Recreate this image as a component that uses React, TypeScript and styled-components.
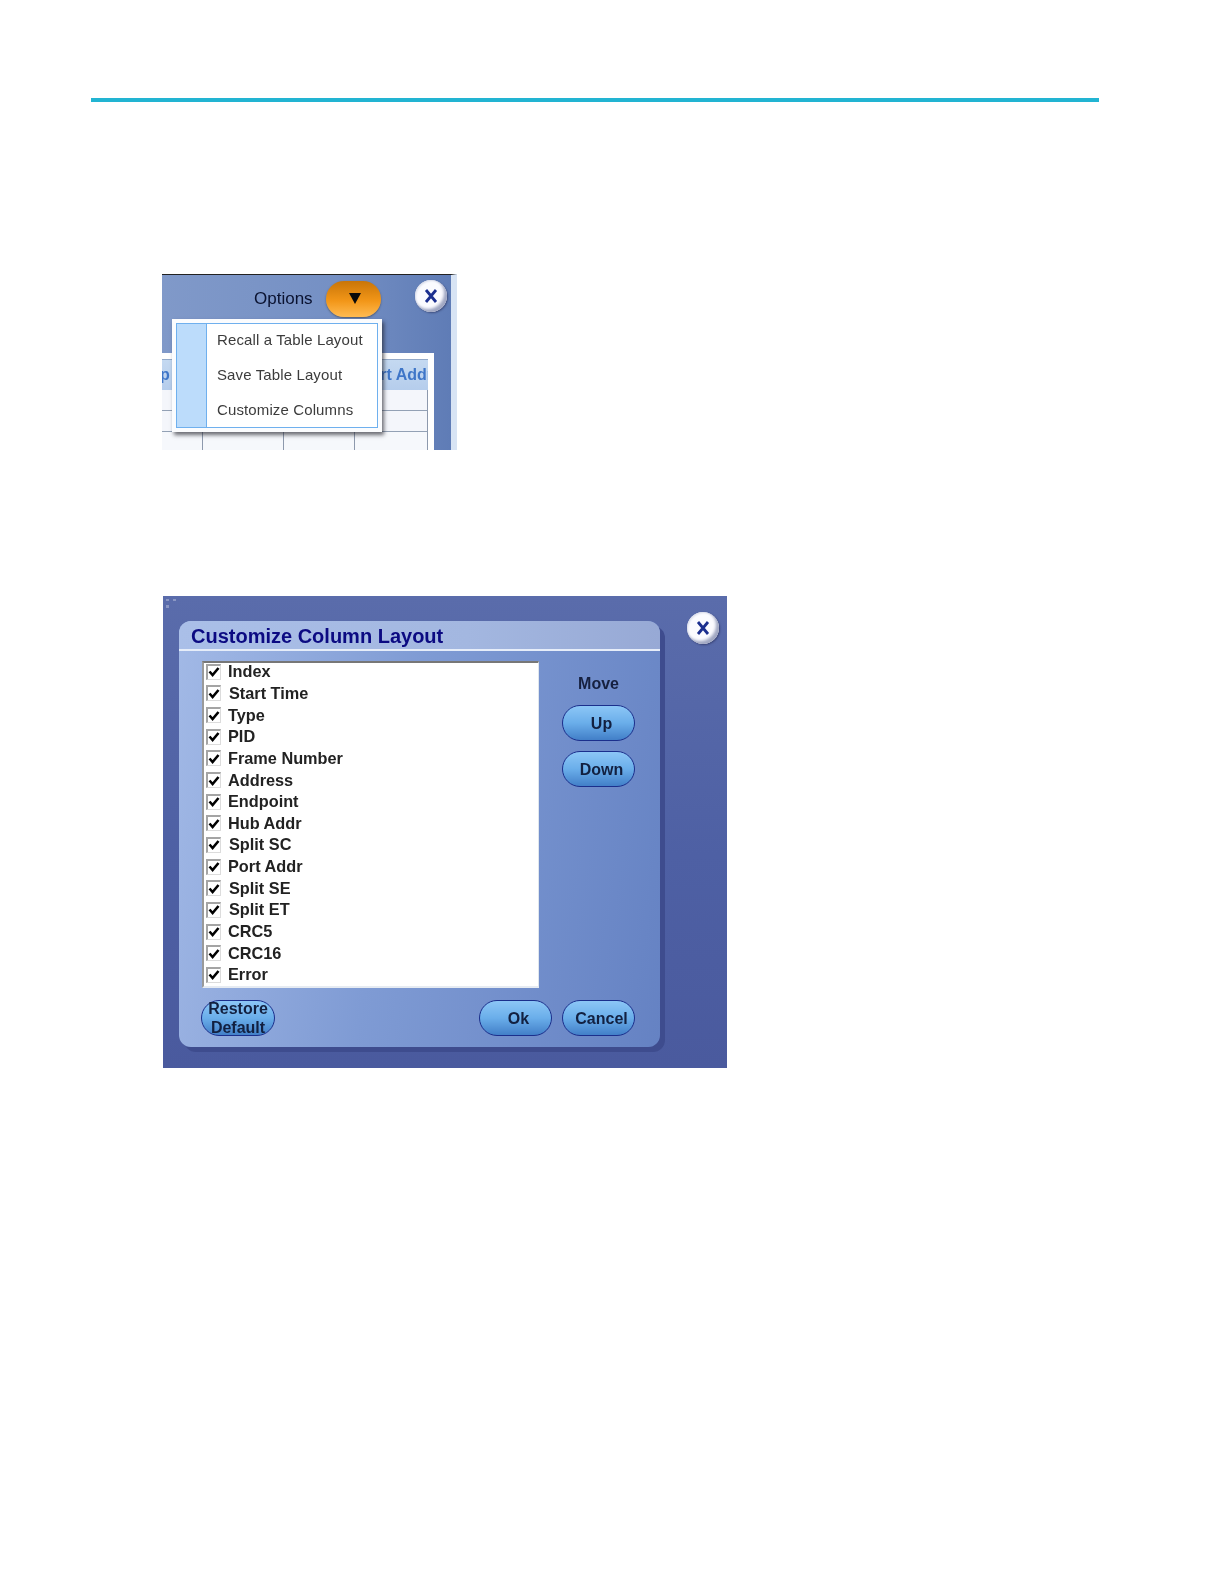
import React from 'react';
import styled, { createGlobalStyle } from 'styled-components';

const GlobalStyle = createGlobalStyle`
  html, body {
    margin: 0;
    padding: 0;
    background: #fff;
    font-family: "Liberation Sans", Arial, sans-serif;
  }
`;

const COLUMNS = [
  'Index',
  'Start Time',
  'Type',
  'PID',
  'Frame Number',
  'Address',
  'Endpoint',
  'Hub Addr',
  'Split SC',
  'Port Addr',
  'Split SE',
  'Split ET',
  'CRC5',
  'CRC16',
  'Error',
];

const CloseIcon = () => (
  <svg width="14" height="14" viewBox="0 0 14 14">
    <path d="M2 1 L12 13 M12 1 L2 13" stroke="#1c2f8f" strokeWidth="2.8" fill="none" />
  </svg>
);

const CheckIcon = () => (
  <svg width="12" height="12" viewBox="0 0 12 12">
    <path d="M1.5 5.5 L4.6 9 L10.5 2" stroke="#000" strokeWidth="2.6" fill="none" />
  </svg>
);

const DragGrip = () => (
  <svg width="16" height="16" viewBox="0 0 16 16">
    <path d="M2 2h3v2H2zM9 2h3v2H9zM2 8h3v3H2z" fill="#8b97c4" />
  </svg>
);

export default function App() {
  return (
    <Page>
      <GlobalStyle />
      <Rule />

      <MenuFigure>
        <TopBar>
          <OptionsLabel>Options</OptionsLabel>
          <OptionsButton>
            <Arrow />
          </OptionsButton>
        </TopBar>
        <CloseButton $top={5} $right={4}>
          <CloseIcon />
        </CloseButton>
        <TablePanel>
          <TableHead>
            <HeadCell $align="left">p</HeadCell>
            <HeadCell $align="right">rt Addr</HeadCell>
          </TableHead>
          <TableRow />
          <TableRow />
          <TableGridRow>
            <span />
            <span />
            <span />
            <span />
          </TableGridRow>
        </TablePanel>
        <Dropdown>
          <DropdownInner>
            <MenuGutter />
            <MenuList>
              <MenuItem>Recall a Table Layout</MenuItem>
              <MenuItem>Save Table Layout</MenuItem>
              <MenuItem>Customize Columns</MenuItem>
            </MenuList>
          </DropdownInner>
        </Dropdown>
      </MenuFigure>

      <DialogFigure>
        <Grip>
          <DragGrip />
        </Grip>
        <CloseButton $top={16} $right={8}>
          <CloseIcon />
        </CloseButton>
        <Panel>
          <TitleBar>Customize Column Layout</TitleBar>
          <PanelBody>
            <ColumnList>
              {COLUMNS.map(name => (
                <ColumnRow key={name}>
                  <CheckBox>
                    <CheckIcon />
                  </CheckBox>
                  <ColumnName $nudge={name.startsWith('S')}>{name}</ColumnName>
                </ColumnRow>
              ))}
            </ColumnList>
            <MoveColumn>
              <MoveLabel>Move</MoveLabel>
              <PillButton>Up</PillButton>
              <PillButton>Down</PillButton>
            </MoveColumn>
          </PanelBody>
          <Footer>
            <PillButton $tight>
              Restore
              <br />
              Default
            </PillButton>
            <FooterRight>
              <PillButton>Ok</PillButton>
              <PillButton>Cancel</PillButton>
            </FooterRight>
          </Footer>
        </Panel>
      </DialogFigure>
    </Page>
  );
}

const Page = styled.div`
  width: 1224px;
  height: 1584px;
  padding-top: 98px;
  box-sizing: border-box;
  overflow: hidden;
`;

const Rule = styled.div`
  width: 1008px;
  height: 4px;
  margin-left: 91px;
  background: #22b4d2;
`;

const MenuFigure = styled.div`
  position: relative;
  width: 295px;
  height: 176px;
  margin: 172px 0 0 162px;
  box-sizing: border-box;
  border-top: 1px solid #222;
  border-right: 6px solid #d8e4f4;
  background: linear-gradient(90deg, #8099c9 0%, #7590c4 60%, #5f7cb6 100%);
  filter: blur(0.5px);
  overflow: hidden;
`;

const TopBar = styled.div`
  display: flex;
  align-items: center;
  height: 42px;
  padding: 5px 0 0 92px;
  box-sizing: border-box;
`;

const OptionsLabel = styled.span`
  width: 72px;
  font-size: 17px;
  color: #0a1230;
`;

const OptionsButton = styled.div`
  display: flex;
  align-items: center;
  justify-content: center;
  width: 55px;
  height: 36px;
  padding-left: 3px;
  box-sizing: border-box;
  border-radius: 18px;
  background: linear-gradient(180deg, #c97508 0%, #f29618 55%, #ffbb52 100%);
  box-shadow: 0 1px 2px rgba(50, 40, 20, 0.5);
`;

const Arrow = styled.div`
  width: 0;
  height: 0;
  border-left: 6px solid transparent;
  border-right: 6px solid transparent;
  border-top: 11px solid #0a0a0a;
`;

const CloseButton = styled.div<{ $top: number; $right: number }>`
  position: absolute;
  top: ${p => p.$top}px;
  right: ${p => p.$right}px;
  display: flex;
  align-items: center;
  justify-content: center;
  width: 32px;
  height: 32px;
  border-radius: 50%;
  background: #fbfbff;
  box-shadow: inset -3px -3px 3px #9fa6c2, inset 1px 1px 2px #d8dcea, 1px 1px 2px rgba(25, 30, 70, 0.5);
`;

const TablePanel = styled.div`
  width: 272px;
  height: 97px;
  margin-top: 36px;
  padding: 6px 6px 0 0;
  box-sizing: border-box;
  background: #fff;
  overflow: hidden;
`;

const TableHead = styled.div`
  display: flex;
  justify-content: space-between;
  align-items: center;
  height: 31px;
  background: linear-gradient(180deg, #c4d9f1, #b5cdec);
  border-top: 1px solid #92a9c9;
  box-sizing: border-box;
  overflow: hidden;
`;

const HeadCell = styled.span<{ $align: 'left' | 'right' }>`
  font-size: 16px;
  font-weight: 700;
  color: #3f76c8;
  white-space: nowrap;
  margin-right: ${p => (p.$align === 'right' ? '-5px' : '0')};
  margin-left: ${p => (p.$align === 'left' ? '-2px' : '0')};
`;

const TableRow = styled.div`
  height: 21px;
  box-sizing: border-box;
  background: #f4f6fb;
  border-bottom: 1px solid #93a1b5;
  border-right: 1px solid #8d99ad;
`;

const TableGridRow = styled.div`
  display: grid;
  grid-template-columns: 41px 81px 71px 73px;
  height: 20px;
  background: #f6f8fc;
  span {
    border-right: 1px solid #8d99ad;
  }
`;

const Dropdown = styled.div`
  position: absolute;
  top: 44px;
  left: 10px;
  width: 210px;
  height: 113px;
  padding: 4px;
  box-sizing: border-box;
  background: #fbfcfe;
  box-shadow: 2px 3px 4px rgba(30, 30, 40, 0.65);
`;

const DropdownInner = styled.div`
  display: flex;
  height: 100%;
  box-sizing: border-box;
  border: 1px solid #6fb0ee;
  background: #fff;
`;

const MenuGutter = styled.div`
  width: 29px;
  background: #bcdcfb;
  border-right: 1px solid #6fb0ee;
`;

const MenuList = styled.div`
  display: flex;
  flex-direction: column;
  gap: 12px;
  padding: 4px 0 0 10px;
`;

const MenuItem = styled.div`
  font-size: 15px;
  line-height: 23px;
  color: #3c3c3c;
  letter-spacing: 0.12px;
  white-space: nowrap;
`;

const DialogFigure = styled.div`
  position: relative;
  width: 564px;
  height: 472px;
  margin: 146px 0 0 163px;
  padding: 25px 0 0 16px;
  box-sizing: border-box;
  background: linear-gradient(180deg, #5a6cab 0%, #4e60a4 55%, #4a5a9e 100%);
  filter: blur(0.5px);
`;

const Grip = styled.div`
  position: absolute;
  top: 1px;
  left: 1px;
  line-height: 0;
`;

const Panel = styled.div`
  width: 481px;
  height: 426px;
  display: flex;
  flex-direction: column;
  border-radius: 12px;
  background: linear-gradient(100deg, #a2b9e6 0%, #7f9bd4 45%, #6582c3 100%);
  box-shadow: 5px 5px 0 #3e4c8e;
`;

const TitleBar = styled.div`
  height: 30px;
  padding: 3px 0 0 12px;
  box-sizing: border-box;
  border-bottom: 2px solid #e6edf9;
  border-radius: 12px 12px 0 0;
  background: linear-gradient(90deg, #aabfe8 0%, #a3b7e0 60%, #97a9d5 100%);
  color: #0b0a82;
  font-size: 20px;
  line-height: 24px;
  font-weight: 700;
`;

const PanelBody = styled.div`
  display: flex;
  margin-top: 10px;
  padding-left: 23px;
`;

const ColumnList = styled.div`
  width: 337px;
  height: 327px;
  padding: 0 0 0 2px;
  box-sizing: border-box;
  background: #fff;
  border-top: 2px solid #777;
  border-left: 2px solid #9a9a9a;
  border-right: 1px solid #dfe6ee;
  border-bottom: 2px solid #e6ebf2;
`;

const ColumnRow = styled.div`
  display: flex;
  align-items: center;
  height: 21.65px;
  &:first-child {
    margin-top: -2px;
  }
`;

const CheckBox = styled.div`
  display: flex;
  align-items: center;
  justify-content: center;
  width: 15px;
  height: 16px;
  box-sizing: border-box;
  border-top: 2px solid #a4a4a4;
  border-left: 2px solid #a4a4a4;
  border-right: 1px solid #dcdcdc;
  border-bottom: 1px solid #dcdcdc;
  background: #fff;
`;

const ColumnName = styled.span<{ $nudge?: boolean }>`
  margin-left: ${p => (p.$nudge ? '8px' : '7px')};
  font-size: 16.3px;
  font-weight: 700;
  color: #222;
  white-space: nowrap;
`;

const MoveColumn = styled.div`
  display: flex;
  flex-direction: column;
  align-items: center;
  width: 73px;
  margin-left: 23px;
  gap: 10px;
`;

const MoveLabel = styled.div`
  height: 34px;
  padding-top: 14px;
  box-sizing: border-box;
  font-size: 16px;
  font-weight: 700;
  color: #16203f;
  line-height: 18px;
`;

const PillButton = styled.div<{ $tight?: boolean }>`
  display: flex;
  align-items: center;
  justify-content: center;
  text-align: center;
  width: ${p => (p.$tight ? '74px' : '73px')};
  height: 36px;
  padding: ${p => (p.$tight ? '0' : '1px 0 0 6px')};
  box-sizing: border-box;
  border: 1.5px solid #1b2f8c;
  border-radius: 18px;
  background: linear-gradient(180deg, #8cc6f6 0%, #6aaeea 50%, #427fc8 100%);
  color: #122040;
  font-size: 16px;
  font-weight: 700;
  line-height: ${p => (p.$tight ? '19px' : '18px')};
  white-space: nowrap;
`;

const Footer = styled.div`
  display: flex;
  justify-content: space-between;
  margin-top: 12px;
  padding: 0 25px 0 22px;
`;

const FooterRight = styled.div`
  display: flex;
  gap: 10px;
`;
